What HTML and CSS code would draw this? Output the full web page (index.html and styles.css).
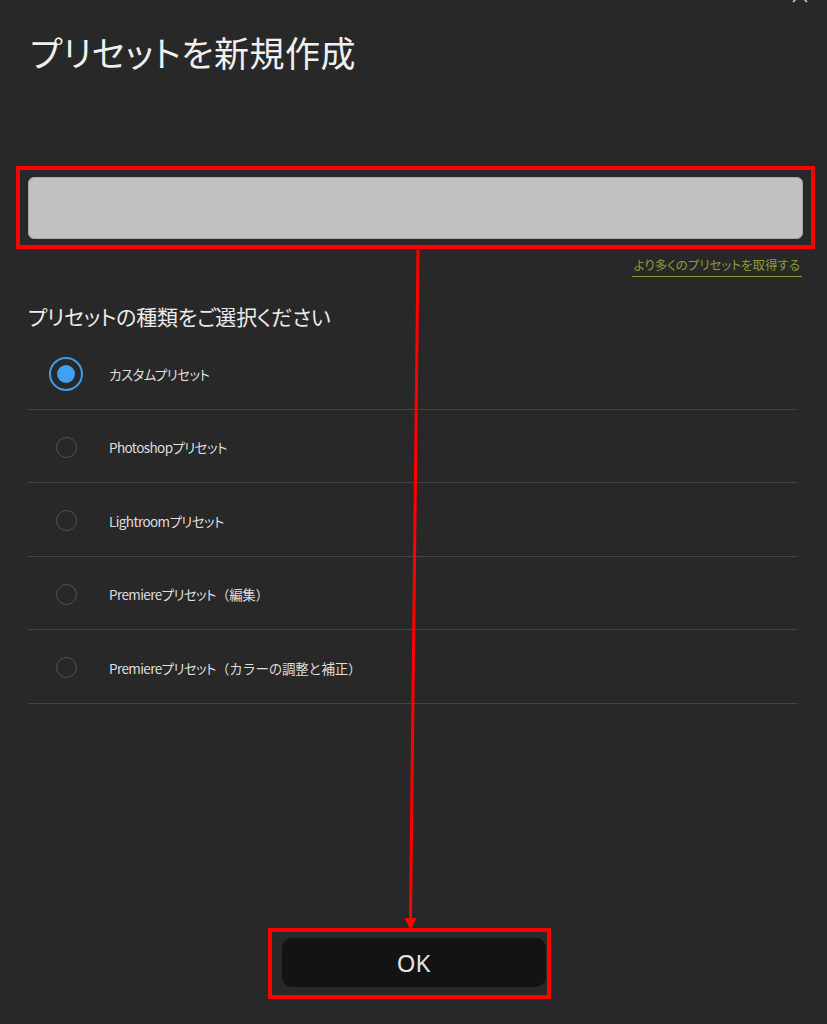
FILE: index.html
```html
<!DOCTYPE html>
<html lang="ja">
<head>
    <meta charset="UTF-8">
    <meta name="viewport" content="width=device-width, initial-scale=1.0">
    <title>プリセットを新規作成</title>
    <link rel="stylesheet" href="styles.css">
</head>
<body>
    <div class="dialog">
        <!-- Close button, only its lower half shows at the top edge -->
        <button class="close-btn" aria-label="閉じる">
            <svg width="18" height="18" viewBox="0 0 18 18">
                <path d="M2 2 L16 16 M16 2 L2 16" stroke="#cfcfcf" stroke-width="1.6" fill="none"/>
            </svg>
        </button>

        <h1 class="title">プリセットを新規作成</h1>

        <!-- Preset name field (highlighted) -->
        <div class="callout callout-name">
            <div class="name-field"></div>
        </div>

        <div class="more">
            <a href="#" class="more-link">より多くのプリセットを取得する</a>
        </div>

        <h2 class="section-title">プリセットの種類をご選択ください</h2>

        <ul class="preset-list">
            <li class="preset-item selected">
                <span class="radio-cell"><span class="radio"></span></span>
                <span class="preset-label">カスタムプリセット</span>
            </li>
            <li class="preset-item">
                <span class="radio-cell"><span class="radio"></span></span>
                <span class="preset-label">Photoshopプリセット</span>
            </li>
            <li class="preset-item">
                <span class="radio-cell"><span class="radio"></span></span>
                <span class="preset-label">Lightroomプリセット</span>
            </li>
            <li class="preset-item">
                <span class="radio-cell"><span class="radio"></span></span>
                <span class="preset-label">Premiereプリセット<span class="paren">（編集）</span></span>
            </li>
            <li class="preset-item">
                <span class="radio-cell"><span class="radio"></span></span>
                <span class="preset-label">Premiereプリセット<span class="paren">（カラーの調整と補正）</span></span>
            </li>
        </ul>

        <div class="footer">
            <div class="callout callout-ok">
                <button class="ok-btn">OK</button>
            </div>
        </div>

        <!-- Annotation arrow from the name field down to OK -->
        <svg class="arrow" width="827" height="1024" viewBox="0 0 827 1024">
            <line x1="418" y1="250" x2="410.5" y2="920" stroke="#ff0000" stroke-width="3"/>
            <polygon points="404.5,918 416.5,918 410.5,930" fill="#ff0000"/>
        </svg>
    </div>
</body>
</html>
```

FILE: styles.css
```css
body {
    margin: 0;
    background-color: #282828;
    color: #e0e0e0;
    font-family: "Noto Sans CJK JP", "Noto Sans", sans-serif;
    font-feature-settings: "palt";
}

.dialog {
    position: relative;
    min-height: 1024px;
    box-sizing: border-box;
    padding: 0 24px 25px 28px;
    display: flex;
    flex-direction: column;
    overflow: hidden;
}

.close-btn {
    position: absolute;
    top: -14px;
    right: 18px;
    padding: 0;
    background: none;
    border: none;
    cursor: pointer;
}

.title {
    margin: 26px 0 0 2px;
    font-size: 35px;
    font-weight: 400;
    line-height: 52px;
    color: #f0f0f0;
    letter-spacing: 0.5px;
}

/* red highlight boxes */
.callout {
    border: 4px solid #ff0000;
}

.callout-name {
    margin: 88px -12px 0 -12px;
    padding: 7px 8px 6px 8px;
}

.name-field {
    height: 60px;
    background-color: #c1c1c1;
    border: 1px solid #a6a6a6;
    border-radius: 6px;
}

.more {
    display: flex;
    justify-content: flex-end;
    margin-top: 7px;
}

.more-link {
    font-size: 12.5px;
    line-height: 18px;
    color: #8d9a3e;
    text-decoration: none;
    border-bottom: 1.5px solid #8d9a3e;
    padding: 0 2px 2px 2px;
    margin-right: 1px;
}

.section-title {
    margin: 24px 0 0 0;
    font-size: 21px;
    font-weight: 400;
    line-height: 30px;
    color: #ececec;
    letter-spacing: -0.2px;
}

.preset-list {
    list-style: none;
    margin: 5px 6px 0 0;
    padding: 0;
}

.preset-item {
    box-sizing: border-box;
    height: 73.5px;
    padding: 3px 0 0 20px;
    border-bottom: 1px solid #444444;
    display: flex;
    align-items: center;
}

.radio-cell {
    width: 36px;
    height: 36px;
    display: flex;
    align-items: center;
    justify-content: center;
    margin-right: 25px;
}

.radio {
    width: 19px;
    height: 19px;
    border: 1.5px solid #555555;
    border-radius: 50%;
}

.selected .radio {
    width: 34px;
    height: 34px;
    border: 2px solid #3d9be9;
    background-color: #40a0f2;
    background-clip: content-box;
    padding: 6px;
    box-sizing: border-box;
}

.preset-label {
    font-size: 13.5px;
    color: #dedede;
    letter-spacing: -0.6px;
}

.paren {
    font-feature-settings: normal;
    letter-spacing: -0.3px;
}

.footer {
    margin-top: auto;
    display: flex;
    justify-content: center;
}

.callout-ok {
    padding: 6px 1px 8px 10px;
    margin-right: 13px;
}

.ok-btn {
    display: block;
    width: 264px;
    height: 49px;
    background-color: #131313;
    border: none;
    border-radius: 10px;
    color: #e4e4e4;
    font-family: "Noto Sans", sans-serif;
    font-size: 24px;
    cursor: pointer;
}

.arrow {
    position: absolute;
    top: 0;
    left: 0;
    pointer-events: none;
}
```
